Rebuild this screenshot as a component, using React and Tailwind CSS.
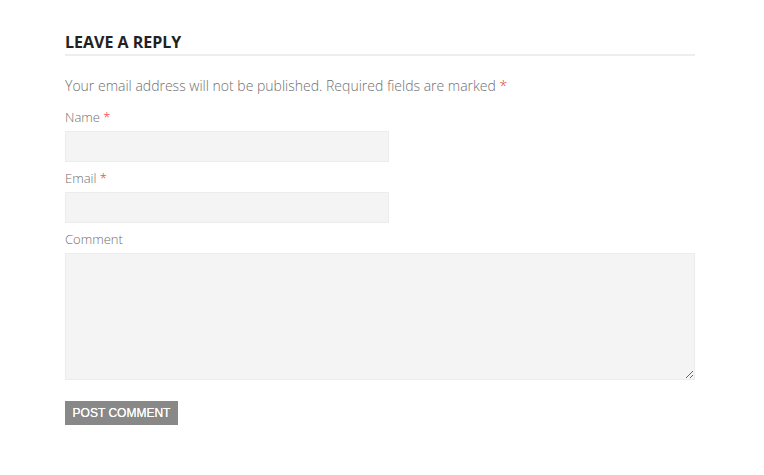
export default function App() {
  return (
    <div className="min-h-[475px] bg-white font-['Open_Sans',sans-serif]">
      <div className="w-[630px] ml-[65px] pt-[32px]">
        <h3 className="text-[16px] leading-[20px] font-bold text-[#222] pb-[2px] border-b-2 border-[#eeeeee] uppercase">
          Leave a Reply
        </h3>
        <form className="flex flex-col" onSubmit={(e) => e.preventDefault()}>
          <p className="mt-[20px] text-[14px] leading-[20px] font-light text-[#6f6f6f]">
            Your email address will not be published. Required fields are marked{" "}
            <span className="text-[#e33]">*</span>
          </p>
          <label className="mt-[12px] text-[13px] leading-[18px] font-light text-[#6f6f6f]">
            Name <span className="text-[#e33]">*</span>
          </label>
          <input
            type="text"
            className="mt-[5px] w-[324px] h-[31px] bg-[#f4f4f4] border border-[#ececec] outline-none"
          />
          <label className="mt-[7px] text-[13px] leading-[18px] font-light text-[#6f6f6f]">
            Email <span className="text-[#e33]">*</span>
          </label>
          <input
            type="email"
            className="mt-[5px] w-[324px] h-[31px] bg-[#f4f4f4] border border-[#ececec] outline-none"
          />
          <label className="mt-[7px] text-[13px] leading-[18px] font-light text-[#6f6f6f]">
            Comment
          </label>
          <textarea className="mt-[5px] w-[630px] h-[127px] bg-[#f4f4f4] border border-[#ececec] outline-none block" />
          <div className="mt-[19px]">
            <button
              type="submit"
              className="h-[24px] pt-[1px] w-[113px] bg-[#888888] text-white text-[12px] font-['Liberation_Sans',Arial,sans-serif] uppercase [text-shadow:0_0_0.4px_#fff]"
            >
              Post Comment
            </button>
          </div>
        </form>
      </div>
    </div>
  );
}
